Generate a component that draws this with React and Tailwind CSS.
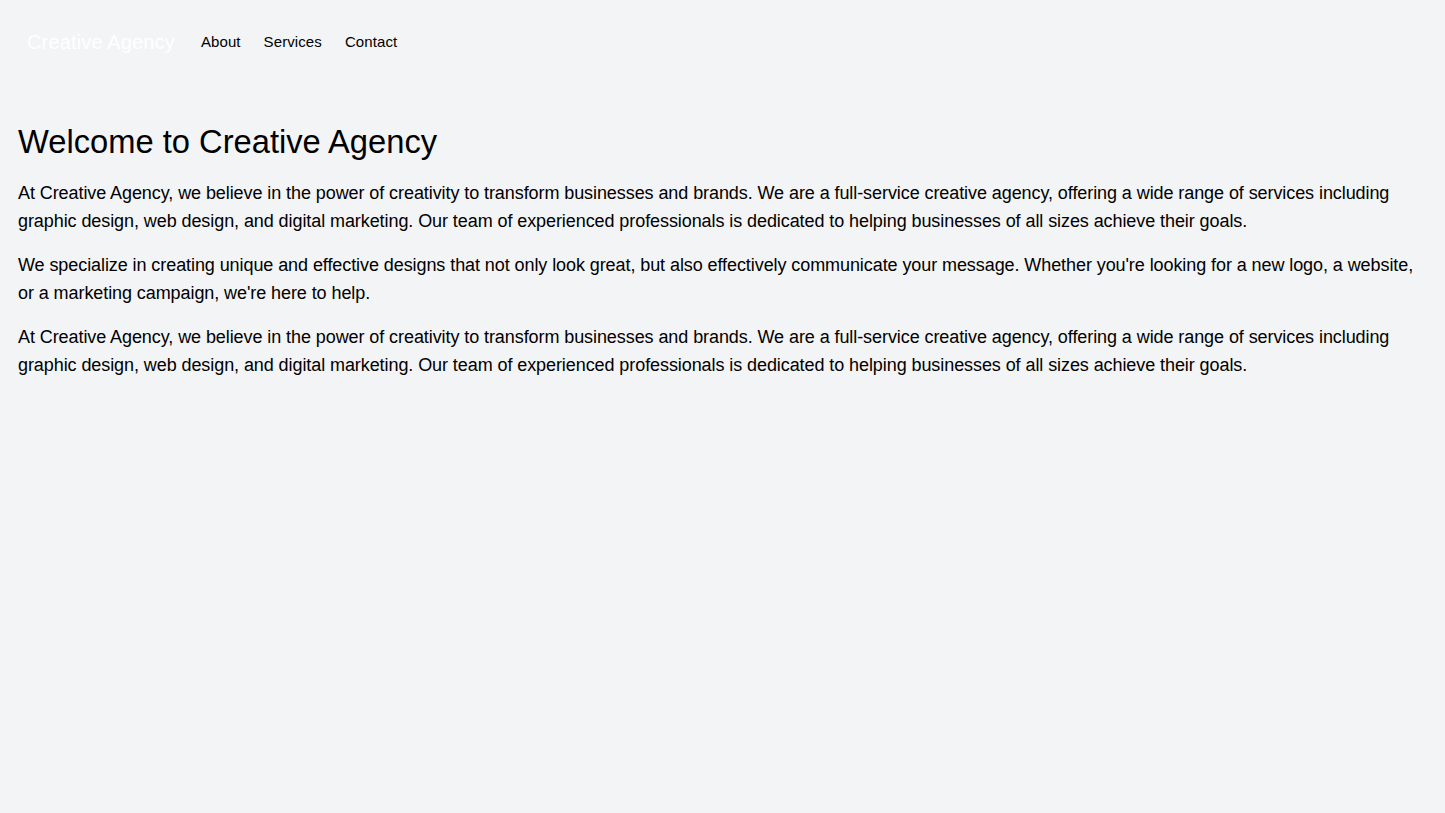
import React from "react";

export default function App() {
  return (
    <div className="min-h-screen bg-gray-100 text-black font-['Liberation_Sans',Arial,sans-serif]">
      {/* Top nav */}
      <nav className="flex items-center px-[27px] pt-[28px] pb-[28px]">
        <span className="text-xl text-white mr-[26px] tracking-[0.15px]">Creative Agency</span>
        <div className="flex items-center gap-[23px] text-[15px] tracking-[0.1px]">
          <a href="#">About</a>
          <a href="#">Services</a>
          <a href="#">Contact</a>
        </div>
      </nav>

      {/* Intro */}
      <main className="px-[18px] pt-[38px]">
        <h1 className="text-[32.7px] leading-10 mb-[17px]">Welcome to Creative Agency</h1>
        <div className="text-lg leading-7 tracking-[-0.08px]">
          <p className="mb-4">
            At Creative Agency, we believe in the power of creativity to transform businesses and brands. We are a
            full-service creative agency, offering a wide range of services including graphic design, web design, and
            digital marketing. Our team of experienced professionals is dedicated to helping businesses of all sizes
            achieve their goals.
          </p>
          <p className="mb-4">
            We specialize in creating unique and effective designs that not only look great, but also effectively
            communicate your message. Whether you're looking for a new logo, a website, or a marketing campaign,
            we're here to help.
          </p>
          <p className="mb-4">
            At Creative Agency, we believe in the power of creativity to transform businesses and brands. We are a
            full-service creative agency, offering a wide range of services including graphic design, web design, and
            digital marketing. Our team of experienced professionals is dedicated to helping businesses of all sizes
            achieve their goals.
          </p>
        </div>
      </main>
    </div>
  );
}
